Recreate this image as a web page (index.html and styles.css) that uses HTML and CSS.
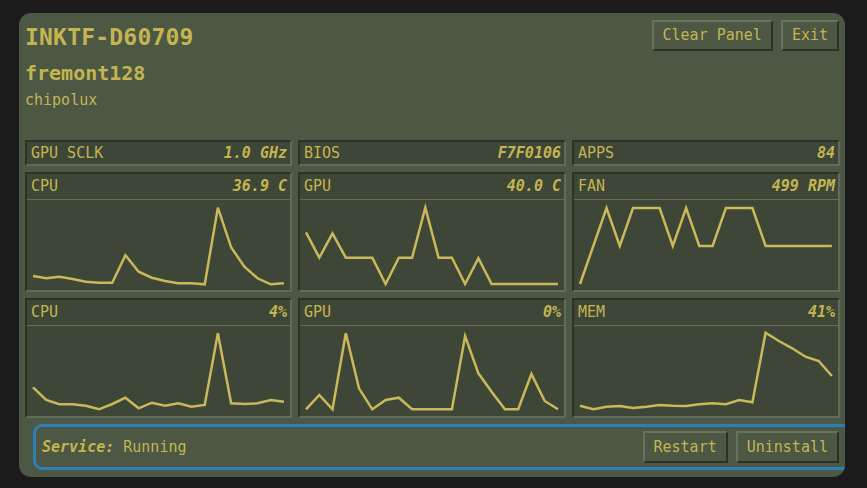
FILE: index.html
```html
<!DOCTYPE html>
<html>
	<head>
		<meta charset="utf-8">
		<title>INKTF-D60709</title>
		<link rel="stylesheet" href="styles.css">
	</head>
	<body>
		<div class="panel">
			<div class="panel-top">
				<div class="ident">
					<h1 class="ident-name">INKTF-D60709</h1>
					<h2 class="ident-host">fremont128</h2>
					<p class="ident-vendor">chipolux</p>
				</div>
				<div class="actions">
					<a href="javascript:void(0)" class="btn">Clear Panel</a>
					<a href="javascript:void(0)" class="btn">Exit</a>
				</div>
			</div>

			<div class="stats">
				<div class="cell info">
					<span class="cell-label">GPU SCLK</span>
					<span class="cell-value">1.0 GHz</span>
				</div>
				<div class="cell info">
					<span class="cell-label">BIOS</span>
					<span class="cell-value">F7F0106</span>
				</div>
				<div class="cell info">
					<span class="cell-label">APPS</span>
					<span class="cell-value">84</span>
				</div>

				<div class="cell graph">
					<div class="graph-head">
						<span class="cell-label">CPU</span>
						<span class="cell-value">36.9 C</span>
					</div>
					<svg class="graph-plot" viewBox="0 0 264 90" preserveAspectRatio="none">
						<polyline points="6,76 19.3,78.3 32.5,76.7 45.8,79 59,81.7 72.3,82.7 85.6,82.7 98.8,55.3 112.1,71.7 125.3,77.7 138.6,81 151.9,83.3 165.1,83.3 178.4,84.3 191.6,7.7 204.9,47.3 218.2,66.7 231.4,78.3 244.7,84.3 257.9,83.3"/>
					</svg>
				</div>
				<div class="cell graph">
					<div class="graph-head">
						<span class="cell-label">GPU</span>
						<span class="cell-value">40.0 C</span>
					</div>
					<svg class="graph-plot" viewBox="0 0 264 90" preserveAspectRatio="none">
						<polyline points="6,32.3 19.3,57.7 32.5,33.3 45.8,57.7 59,57.7 72.3,57.7 85.6,84 98.8,57.7 112.1,57.7 125.3,7.7 138.6,57.7 151.9,57.7 165.1,84 178.4,58.3 191.6,84 204.9,84 218.2,84 231.4,84 244.7,84 257.9,84"/>
					</svg>
				</div>
				<div class="cell graph">
					<div class="graph-head">
						<span class="cell-label">FAN</span>
						<span class="cell-value">499 RPM</span>
					</div>
					<svg class="graph-plot" viewBox="0 0 264 90" preserveAspectRatio="none">
						<polyline points="6,84 19.3,46 32.5,8 45.8,46 59,8 72.3,8 85.6,8 98.8,46 112.1,8 125.3,46 138.6,46 151.9,8 165.1,8 178.4,8 191.6,46 204.9,46 218.2,46 231.4,46 244.7,46 257.9,46"/>
					</svg>
				</div>

				<div class="cell graph">
					<div class="graph-head">
						<span class="cell-label">CPU</span>
						<span class="cell-value">4%</span>
					</div>
					<svg class="graph-plot" viewBox="0 0 264 90" preserveAspectRatio="none">
						<polyline points="6,61.3 19.3,74 32.5,78.3 45.8,78.3 59,79.7 72.3,83.3 85.6,78 98.8,71.7 112.1,82.3 125.3,76.7 138.6,79.7 151.9,77.3 165.1,80.7 178.4,79 191.6,7.3 204.9,77.3 218.2,78 231.4,77.3 244.7,74 257.9,75.7"/>
					</svg>
				</div>
				<div class="cell graph">
					<div class="graph-head">
						<span class="cell-label">GPU</span>
						<span class="cell-value">0%</span>
					</div>
					<svg class="graph-plot" viewBox="0 0 264 90" preserveAspectRatio="none">
						<polyline points="6,83.3 19.3,69 32.5,83.3 45.8,7.3 59,62.3 72.3,83.3 85.6,74 98.8,71.7 112.1,83.3 125.3,83.3 138.6,83.3 151.9,83.3 165.1,10 178.4,47.3 191.6,65.7 204.9,83.3 218.2,83.3 231.4,48 244.7,75 257.9,83.3"/>
					</svg>
				</div>
				<div class="cell graph">
					<div class="graph-head">
						<span class="cell-label">MEM</span>
						<span class="cell-value">41%</span>
					</div>
					<svg class="graph-plot" viewBox="0 0 264 90" preserveAspectRatio="none">
						<polyline points="6,79.7 19.3,83.3 32.5,80.7 45.8,80 59,82 72.3,80.7 85.6,79 98.8,79.7 112.1,80 125.3,78.3 138.6,77.3 151.9,78.3 165.1,74 178.4,76.3 191.6,6.7 204.9,15 218.2,22.3 231.4,30.7 244.7,35 257.9,50"/>
					</svg>
				</div>
			</div>

			<div class="service">
				<p class="service-status"><em>Service:</em> Running</p>
				<div class="actions">
					<a href="javascript:void(0)" class="btn btn-tall">Restart</a>
					<a href="javascript:void(0)" class="btn btn-tall">Uninstall</a>
				</div>
			</div>
		</div>
	</body>
</html>
```

FILE: styles.css
```css
*{margin:0;padding:0;box-sizing:border-box;}
a{text-decoration:none;}
body{background:#1b1b1b;font-family:"DejaVu Sans Mono","Liberation Mono",monospace;color:#c4b550;}

/* main panel */
.panel{width:826px;height:464px;margin:13px 0 0 19px;padding:7px 5px 0 6px;background:#4c5744;border-radius:12px;overflow:hidden;}
.panel-top{display:flex;justify-content:space-between;align-items:flex-start;}

.ident-name{font-size:23px;line-height:28px;font-weight:bold;margin-top:3px;letter-spacing:0.2px;}
.ident-host{font-size:20px;line-height:24px;font-weight:bold;margin-top:10px;}
.ident-vendor{font-size:15px;line-height:20px;margin-top:5px;}

.actions{display:flex;gap:8px;margin-right:1px;}
.btn{display:block;height:31px;padding:0 9px;font-size:15px;line-height:27px;color:#c4b550;background:#4c5744;
border:2px solid;border-color:#66725d #2b3126 #2b3126 #66725d;}
.btn-tall{height:32px;line-height:28px;}

/* stat grid */
.stats{display:grid;grid-template-columns:267px 268px 268px;grid-template-rows:26px 120px 120px;gap:6px;margin-top:30px;}
.cell{background:#3e4637;border:2px solid;border-color:#2c3227 #606c57 #606c57 #2c3227;font-size:15px;}
.cell-value{font-weight:bold;font-style:italic;}

.info{display:flex;justify-content:space-between;padding:0 3px 0 4px;line-height:22px;}

.graph{display:flex;flex-direction:column;}
.graph-head{display:flex;justify-content:space-between;height:26px;padding:0 3px 0 4px;line-height:25px;border-bottom:1px solid #646e53;}
.graph-plot{display:block;width:100%;height:90px;}
.graph-plot polyline{fill:none;stroke:#cbb85a;stroke-width:2.5;}

/* service bar */
.service{display:flex;justify-content:space-between;align-items:center;height:46px;margin:6px -14px 0 8px;padding:0 11px 0 6px;
border:3px solid #2a7fb4;border-radius:9px;}
.service-status{font-size:15px;line-height:20px;}
.service-status em{font-weight:bold;}
```
